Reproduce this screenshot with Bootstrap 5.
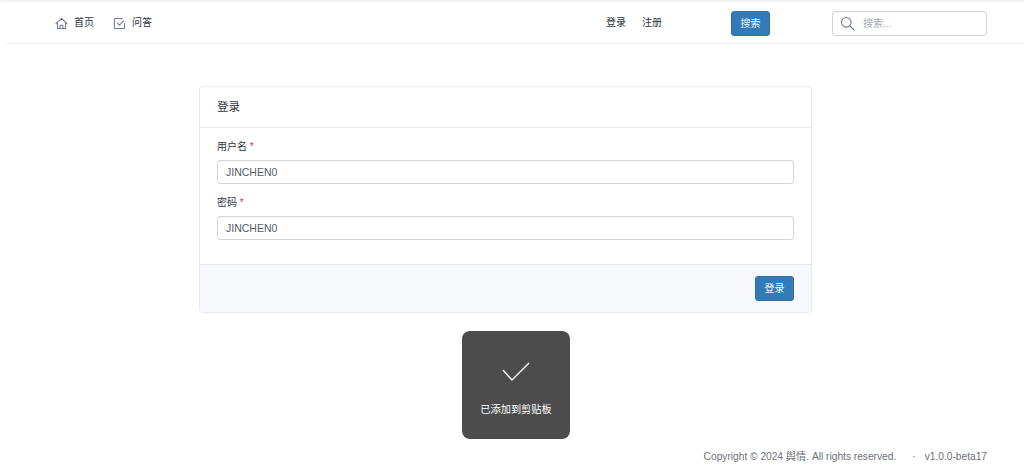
<!DOCTYPE html>
<html lang="zh-CN">
<head>
  <meta charset="UTF-8" />
  <meta name="viewport" content="width=device-width, initial-scale=1.0"/>
  <title>登录</title>
  <link href="https://cdn.jsdelivr.net/npm/bootstrap@5.3.3/dist/css/bootstrap.min.css" rel="stylesheet">
  <style>
    html, body {
      height: 465px;
      overflow: hidden;
    }
    body {
      background-color: #fff;
      color: #2f3542;
      font-family: "Liberation Sans", "Noto Sans CJK SC", sans-serif;
      font-size: 10.5px;
      border-top: 2px solid #f1f2f4;
      display: flex;
      flex-direction: column;
    }
    .top-bar {
      height: 42px;
      margin-left: 6px;
      padding: 1px 37px 0 49px;
      border-bottom: 1px solid #eceef1;
      box-shadow: 0 1px 2px rgba(30, 40, 60, .03);
    }
    .top-link {
      color: #2f3542;
      font-size: 10px;
      text-decoration: none;
      display: flex;
      align-items: center;
      gap: 6px;
      line-height: 14px;
    }
    .top-link svg {
      width: 13px;
      height: 13px;
      fill: none;
      stroke: #6b7a90;
      stroke-width: 1.1;
      stroke-linecap: round;
      stroke-linejoin: round;
    }
    .main-links { gap: 19px; }
    .user-links { gap: 16px; margin-left: 454px; }
    .blue-btn {
      --bs-btn-bg: #337ab7;
      --bs-btn-border-color: #2f70a8;
      --bs-btn-hover-bg: #2e6da4;
      --bs-btn-hover-border-color: #2e6da4;
      --bs-btn-color: #f1f5f9;
      --bs-btn-font-size: 10px;
      --bs-btn-padding-x: 0;
      --bs-btn-padding-y: 0;
      --bs-btn-border-radius: 3px;
      width: 39px;
      height: 25px;
      line-height: 23px;
    }
    .search-btn { margin-left: 69px; }
    .search-wrap {
      width: 155px;
      height: 25px;
      margin-left: auto;
      border: 1px solid #d4d6d9;
      border-radius: 3px;
      padding-left: 7px;
      gap: 8px;
      box-shadow: inset 0 1px 1px rgba(0, 0, 0, .05);
    }
    .search-wrap svg {
      width: 15px;
      height: 15px;
      flex: none;
      fill: none;
      stroke: #6b7a90;
      stroke-width: 1.1;
      stroke-linecap: round;
    }
    .search-wrap input {
      border: 0;
      outline: 0;
      padding: 0;
      width: 110px;
      font-size: 10px;
      background: transparent;
    }
    .search-wrap input::placeholder { color: #a4abb6; }
    .login-card {
      width: 613px;
      height: 227px;
      margin: 42px 0 0 199px;
      --bs-card-border-color: #e8eaed;
      --bs-card-border-radius: 4px;
      --bs-card-inner-border-radius: 3px;
      --bs-card-cap-bg: transparent;
    }
    .login-head {
      height: 41px;
      padding: 0 17px;
      font-size: 11.5px;
      line-height: 40px;
      border-bottom-color: #e8eaed;
    }
    .login-body {
      padding: 11px 17px 0;
      flex: 1 1 auto;
    }
    .field-label {
      font-size: 10px;
      line-height: 15px;
      margin-bottom: 6px;
      display: block;
    }
    .field-label span { color: #d63939; }
    .field-gap { margin-bottom: 11px; }
    .field-input {
      height: 24px;
      min-height: 24px;
      padding: 0 8px;
      font-size: 10.5px;
      color: #555b66;
      border-color: #d4d6d9;
      border-radius: 3px;
      box-shadow: inset 0 1px 1px rgba(0, 0, 0, .05);
    }
    .login-foot {
      height: 48px;
      padding: 0 17px;
      background: #f7f8fb;
      border-top-color: #e8eaed;
    }
    .toast-box {
      position: absolute;
      left: 462px;
      top: 331px;
      width: 108px;
      height: 108px;
      background: #4c4c4c;
      border-radius: 8px;
      color: #fff;
      font-size: 10.2px;
    }
    .toast-box svg {
      width: 30px;
      height: 22px;
      margin-top: 30px;
      fill: none;
      stroke: #f2f2f2;
      stroke-width: 1.5;
    }
    .toast-text { margin-top: 20px; line-height: 14px; }
    .page-foot {
      position: absolute;
      top: 450px;
      right: 37px;
      font-size: 10.2px;
      line-height: 14px;
      color: #6b7078;
    }
    .foot-dot { margin: 0 9px 0 16px; }
  </style>
</head>
<body>

<nav class="top-bar d-flex align-items-center">
  <div class="main-links d-flex">
    <a class="top-link" href="#">
      <svg viewBox="0 0 14 14"><path d="M1 7.2 7 1.5l6 5.7"/><path d="M2.6 6v6.5h8.8V6"/><path d="M5.5 12.5V9h3v3.5"/></svg>
      首页
    </a>
    <a class="top-link" href="#">
      <svg viewBox="0 0 14 14"><path d="M12.5 7v4.5a1 1 0 0 1-1 1h-9a1 1 0 0 1-1-1v-9a1 1 0 0 1 1-1H10"/><path d="m4.8 6.5 2.2 2.2 4.5-4.5"/></svg>
      问答
    </a>
  </div>
  <div class="user-links d-flex">
    <a class="top-link" href="#">登录</a>
    <a class="top-link" href="#">注册</a>
  </div>
  <button class="btn btn-primary blue-btn search-btn" type="button">搜索</button>
  <div class="search-wrap d-flex align-items-center">
    <svg viewBox="0 0 15 15"><circle cx="6.3" cy="6.3" r="4.8"/><path d="m10 10 4 4"/></svg>
    <input type="text" placeholder="搜索...">
  </div>
</nav>

<div class="card login-card">
  <div class="card-header login-head">登录</div>
  <div class="login-body">
    <div class="field-gap">
      <label class="field-label">用户名 <span>*</span></label>
      <input type="text" class="form-control field-input" value="JINCHEN0">
    </div>
    <div>
      <label class="field-label">密码 <span>*</span></label>
      <input type="text" class="form-control field-input" value="JINCHEN0">
    </div>
  </div>
  <div class="card-footer login-foot d-flex align-items-center justify-content-end">
    <button class="btn btn-primary blue-btn" type="button">登录</button>
  </div>
</div>

<div class="toast-box text-center">
  <svg viewBox="0 0 30 22"><path d="m2 9 9 10L28 2"/></svg>
  <div class="toast-text">已添加到剪贴板</div>
</div>

<footer class="page-foot d-flex">
  <span>Copyright © 2024 舆情. All rights reserved.</span>
  <span class="foot-dot">·</span>
  <span>v1.0.0-beta17</span>
</footer>

</body>
</html>
